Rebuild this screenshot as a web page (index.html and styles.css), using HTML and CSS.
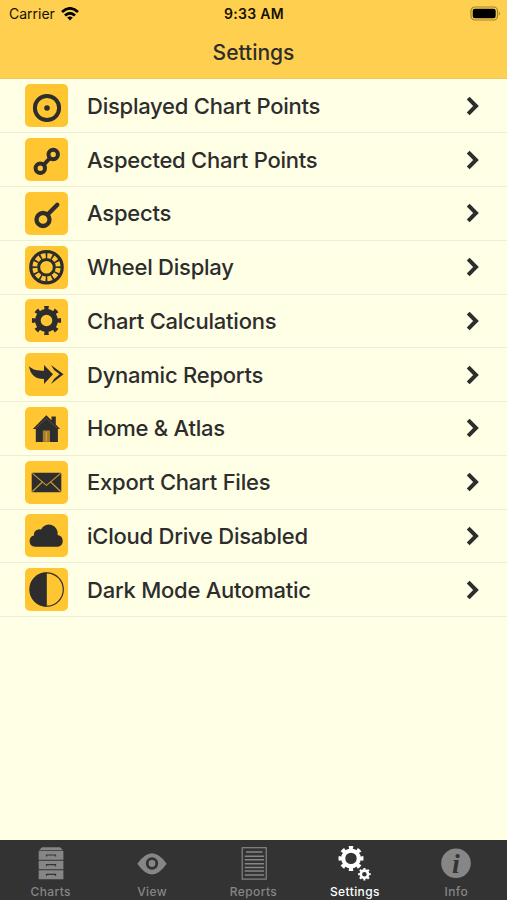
FILE: index.html
```
<!DOCTYPE html>
<html lang="en">
<head>
  <meta charset="UTF-8">
  <meta name="viewport" content="width=device-width, initial-scale=1.0">
  <title>Settings</title>
  <link rel="stylesheet" href="styles.css">
</head>
<body>
  <svg class="defs" width="0" height="0">
    <symbol id="chevron" viewBox="0 0 14 20">
      <path d="M2.2 2.2 L10 10 L2.2 17.8" fill="none" stroke="#2d2d2d" stroke-width="4"/>
    </symbol>
  </svg>

  <header class="header">
    <div class="status-bar">
      <div class="carrier">
        <span>Carrier</span>
        <svg class="wifi" viewBox="0 0 18 14" width="18" height="14">
          <g fill="none" stroke="#000" stroke-width="2.8">
            <path d="M1 5 Q9 -2.2 17 5"/>
            <path d="M4 8.5 Q9 3.9 14 8.5"/>
          </g>
          <path d="M6.2 10.6 Q9 8.4 11.8 10.6 L9 13.5 Z"/>
        </svg>
      </div>
      <span class="time">9:33 AM</span>
      <svg class="battery" viewBox="0 0 31 15" width="31" height="15">
        <rect x="1" y="1" width="26.5" height="13" rx="4" fill="none" stroke="#a1822f" stroke-width="1.2"/>
        <rect x="2.7" y="2.7" width="23" height="9.6" rx="2.2"/>
        <path d="M28.8 5.2 Q31 7.5 28.8 9.8 Z" fill="#a1822f"/>
      </svg>
    </div>
    <h1 class="title">Settings</h1>
  </header>

  <main class="list">
    <div class="row">
      <svg class="icon" viewBox="0 0 43 43">
        <circle cx="22" cy="24" r="12.1" fill="none" stroke="#2d2d2d" stroke-width="4"/>
        <circle cx="22" cy="24" r="2.8"/>
      </svg>
      <span class="label">Displayed Chart Points</span>
      <svg class="chevron"><use href="#chevron"/></svg>
    </div>
    <div class="row">
      <svg class="icon" viewBox="0 0 43 43">
        <g fill="none" stroke="#2d2d2d" stroke-width="4">
          <circle cx="28.2" cy="16.5" r="4.7"/>
          <circle cx="15.3" cy="30.3" r="4.7"/>
          <path d="M25 20 L18.6 26.8"/>
        </g>
      </svg>
      <span class="label">Aspected Chart Points</span>
      <svg class="chevron"><use href="#chevron"/></svg>
    </div>
    <div class="row">
      <svg class="icon" viewBox="0 0 43 43">
        <g fill="none" stroke="#2d2d2d" stroke-width="4.3">
          <circle cx="18" cy="27.5" r="6.5"/>
          <path d="M22.6 22.5 L32.3 12.8" stroke-linecap="round"/>
        </g>
      </svg>
      <span class="label">Aspects</span>
      <svg class="chevron"><use href="#chevron"/></svg>
    </div>
    <div class="row">
      <svg class="icon" viewBox="0 0 43 43">
        <g fill="none" stroke="#2d2d2d">
          <circle cx="21.5" cy="21.2" r="15.7" stroke-width="3.2"/>
          <circle cx="21.5" cy="21.2" r="7.8" stroke-width="3"/>
          <circle cx="21.5" cy="21.2" r="11.5" stroke-width="6" pathLength="120" stroke-dasharray="2.8 7.2" stroke-dashoffset="1.4"/>
        </g>
      </svg>
      <span class="label">Wheel Display</span>
      <svg class="chevron"><use href="#chevron"/></svg>
    </div>
    <div class="row">
      <svg class="icon" viewBox="0 0 43 43">
        <g fill="none" stroke="#2d2d2d">
          <circle cx="21.5" cy="21.5" r="8.6" stroke-width="5.6"/>
          <circle cx="21.5" cy="21.5" r="12.5" stroke-width="4.2" pathLength="80" stroke-dasharray="4.4 5.6" stroke-dashoffset="2.2"/>
        </g>
      </svg>
      <span class="label">Chart Calculations</span>
      <svg class="chevron"><use href="#chevron"/></svg>
    </div>
    <div class="row">
      <svg class="icon" viewBox="0 0 43 43">
        <path d="M4 13.3 C8 17.2 13 17.8 19 17.8 V12 L28 21.3 L19 31 V26 C10 26 5.5 22 4 13.3 Z"/>
        <path d="M26 12 L38.5 21.3 L26 31 L29 26 L34.6 21.3 L29 17 Z"/>
      </svg>
      <span class="label">Dynamic Reports</span>
      <svg class="chevron"><use href="#chevron"/></svg>
    </div>
    <div class="row">
      <svg class="icon" viewBox="0 0 43 43">
        <path d="M21.3 8.3 L26.5 13.3 V9.5 H30.8 V17.6 L35 22 H32.9 V35 H10.8 V22 H7.8 Z"/>
        <path d="M10.5 21.5 L21.3 11.2 L32.5 21.5" fill="none" stroke="#8d6f2b" stroke-width=".5"/>
        <rect x="17.8" y="23.5" width="7.2" height="11.5" fill="#a67e29"/>
        <path d="M21.4 24.5 V34" stroke="#d0a036" stroke-width="1.4"/>
      </svg>
      <span class="label">Home &amp; Atlas</span>
      <svg class="chevron"><use href="#chevron"/></svg>
    </div>
    <div class="row">
      <svg class="icon" viewBox="0 0 43 43">
        <rect x="6.7" y="11.7" width="29.6" height="19.5" rx="1"/>
        <path d="M7.4 12.4 L21.5 24.3 L35.6 12.4 M7.4 30.5 L17.3 21 M35.6 30.5 L25.7 21" fill="none" stroke="#c99c35" stroke-width="1.1"/>
      </svg>
      <span class="label">Export Chart Files</span>
      <svg class="chevron"><use href="#chevron"/></svg>
    </div>
    <div class="row">
      <svg class="icon" viewBox="0 0 43 43">
        <path d="M10 32.8 A5.8 5.8 0 0 1 8.9 21.4 A5.4 5.4 0 0 1 16 15.6 A8.8 8.8 0 0 1 32.6 21 A6 6 0 0 1 33 32.8 Z"/>
      </svg>
      <span class="label">iCloud Drive Disabled</span>
      <svg class="chevron"><use href="#chevron"/></svg>
    </div>
    <div class="row">
      <svg class="icon" viewBox="0 0 43 43">
        <circle cx="21.6" cy="21.5" r="16.7" fill="none" stroke="#2d2d2d" stroke-width="1.2"/>
        <path d="M21.8 4.5 A17 17 0 0 0 21.8 38.5 Z"/>
      </svg>
      <span class="label">Dark Mode Automatic</span>
      <svg class="chevron"><use href="#chevron"/></svg>
    </div>
  </main>

  <nav class="tab-bar">
    <div class="tab">
      <svg class="tab-icon" viewBox="0 0 36 36">
        <path d="M9 1.2 H27 L30 4.2 H6 Z"/>
        <path d="M5.7 5 H30.4 V13.8 H5.7 Z M5.7 14.7 H30.4 V23.3 H5.7 Z M5.7 24.2 H30.4 V33.2 H5.7 Z"/>
        <path d="M13.5 10.6 V9 H22.5 V10.6 M13.5 20.2 V18.6 H22.5 V20.2 M13.5 30 V28.4 H22.5 V30" fill="none" stroke="#333" stroke-width="1.2"/>
      </svg>
      <span>Charts</span>
    </div>
    <div class="tab">
      <svg class="tab-icon" viewBox="0 0 36 36">
        <path d="M3.3 17.8 Q18 -3.4 32.7 17.8 Q18 39 3.3 17.8 Z"/>
        <circle cx="18" cy="17.5" r="4.8" fill="none" stroke="#333" stroke-width="2.8"/>
      </svg>
      <span>View</span>
    </div>
    <div class="tab">
      <svg class="tab-icon" viewBox="0 0 36 36">
        <rect x="6.2" y="1.7" width="24" height="31.4" fill="none" stroke="#868686" stroke-width="1.2"/>
        <path d="M10 6 H26.5 M8.7 10.2 H28 M8.7 13.8 H28 M8.7 17.7 H28 M8.7 21.4 H28 M8.7 25.1 H28 M8.7 28.9 H28" stroke="#868686" stroke-width="1.5"/>
      </svg>
      <span>Reports</span>
    </div>
    <div class="tab active">
      <svg class="tab-icon" viewBox="0 0 36 36">
        <g fill="none" stroke="#fff">
          <circle cx="14" cy="12.4" r="7.8" stroke-width="4.2"/>
          <circle cx="14" cy="12.4" r="10.8" stroke-width="3.4" pathLength="80" stroke-dasharray="5 5" stroke-dashoffset="2.5"/>
          <circle cx="27.4" cy="28.2" r="3.6" stroke-width="2.6"/>
          <circle cx="27.4" cy="28.2" r="5.2" stroke-width="2.2" pathLength="80" stroke-dasharray="5 5" stroke-dashoffset="2.5"/>
        </g>
      </svg>
      <span>Settings</span>
    </div>
    <div class="tab">
      <svg class="tab-icon" viewBox="0 0 36 36">
        <circle cx="18" cy="17.2" r="14.8"/>
        <text x="18" y="26.5" class="info-letter">i</text>
      </svg>
      <span>Info</span>
    </div>
  </nav>
</body>
</html>
```

FILE: styles.css
```
* {
  box-sizing: border-box;
}

body {
  margin: 0;
  height: 900px;
  display: flex;
  flex-direction: column;
  overflow: hidden;
  background-color: #ffffe5;
  font-family: Inter, "Liberation Sans", sans-serif;
  color: #2d2d2d;
}

.defs {
  display: none;
}

/* Header */
.header {
  height: 79px;
  background-color: #ffd050;
  border-bottom: 1px solid #efc659;
}

.status-bar {
  display: grid;
  grid-template-columns: 1fr auto 1fr;
  align-items: center;
  height: 27px;
  padding: 0 6px 0 9px;
  color: #151100;
}

.carrier {
  display: flex;
  align-items: center;
  gap: 6px;
  font-size: 14px;
}

.time {
  margin-left: -2px;
  font-size: 14px;
  font-weight: 600;
  letter-spacing: 0.3px;
}

.battery {
  justify-self: end;
}

.title {
  margin: 0;
  text-align: center;
  font-size: 21px;
  line-height: 52px;
  font-weight: 500;
}

/* Settings list */
.list {
  flex: 1;
  padding-top: 0.6px;
}

.row {
  display: flex;
  align-items: center;
  height: 53.75px;
  padding: 0 27px 0 25px;
  border-bottom: 1px solid #ededd8;
}

.icon {
  width: 43px;
  height: 43px;
  margin-right: 19px;
  border-radius: 5px;
  background-color: #ffc631;
  fill: #2d2d2d;
}

.label {
  flex: 1;
  font-size: 22px;
  font-weight: 500;
  letter-spacing: -0.24px;
}

.chevron {
  width: 14px;
  height: 20px;
}

/* Bottom tabs */
.tab-bar {
  display: flex;
  height: 60px;
  background-color: #333;
}

.tab {
  flex: 1;
  display: flex;
  flex-direction: column;
  align-items: center;
  padding-top: 6px;
  font-size: 12px;
  line-height: 19px;
  font-weight: 500;
  letter-spacing: 0.4px;
  color: #868686;
  fill: #868686;
}

.tab-icon {
  width: 36px;
  height: 36px;
  flex-shrink: 0;
}

.active {
  color: #fff;
  fill: #fff;
}

.info-letter {
  font: italic bold 28px "Liberation Serif", serif;
  letter-spacing: 0;
  text-anchor: middle;
  fill: #333;
}
```
